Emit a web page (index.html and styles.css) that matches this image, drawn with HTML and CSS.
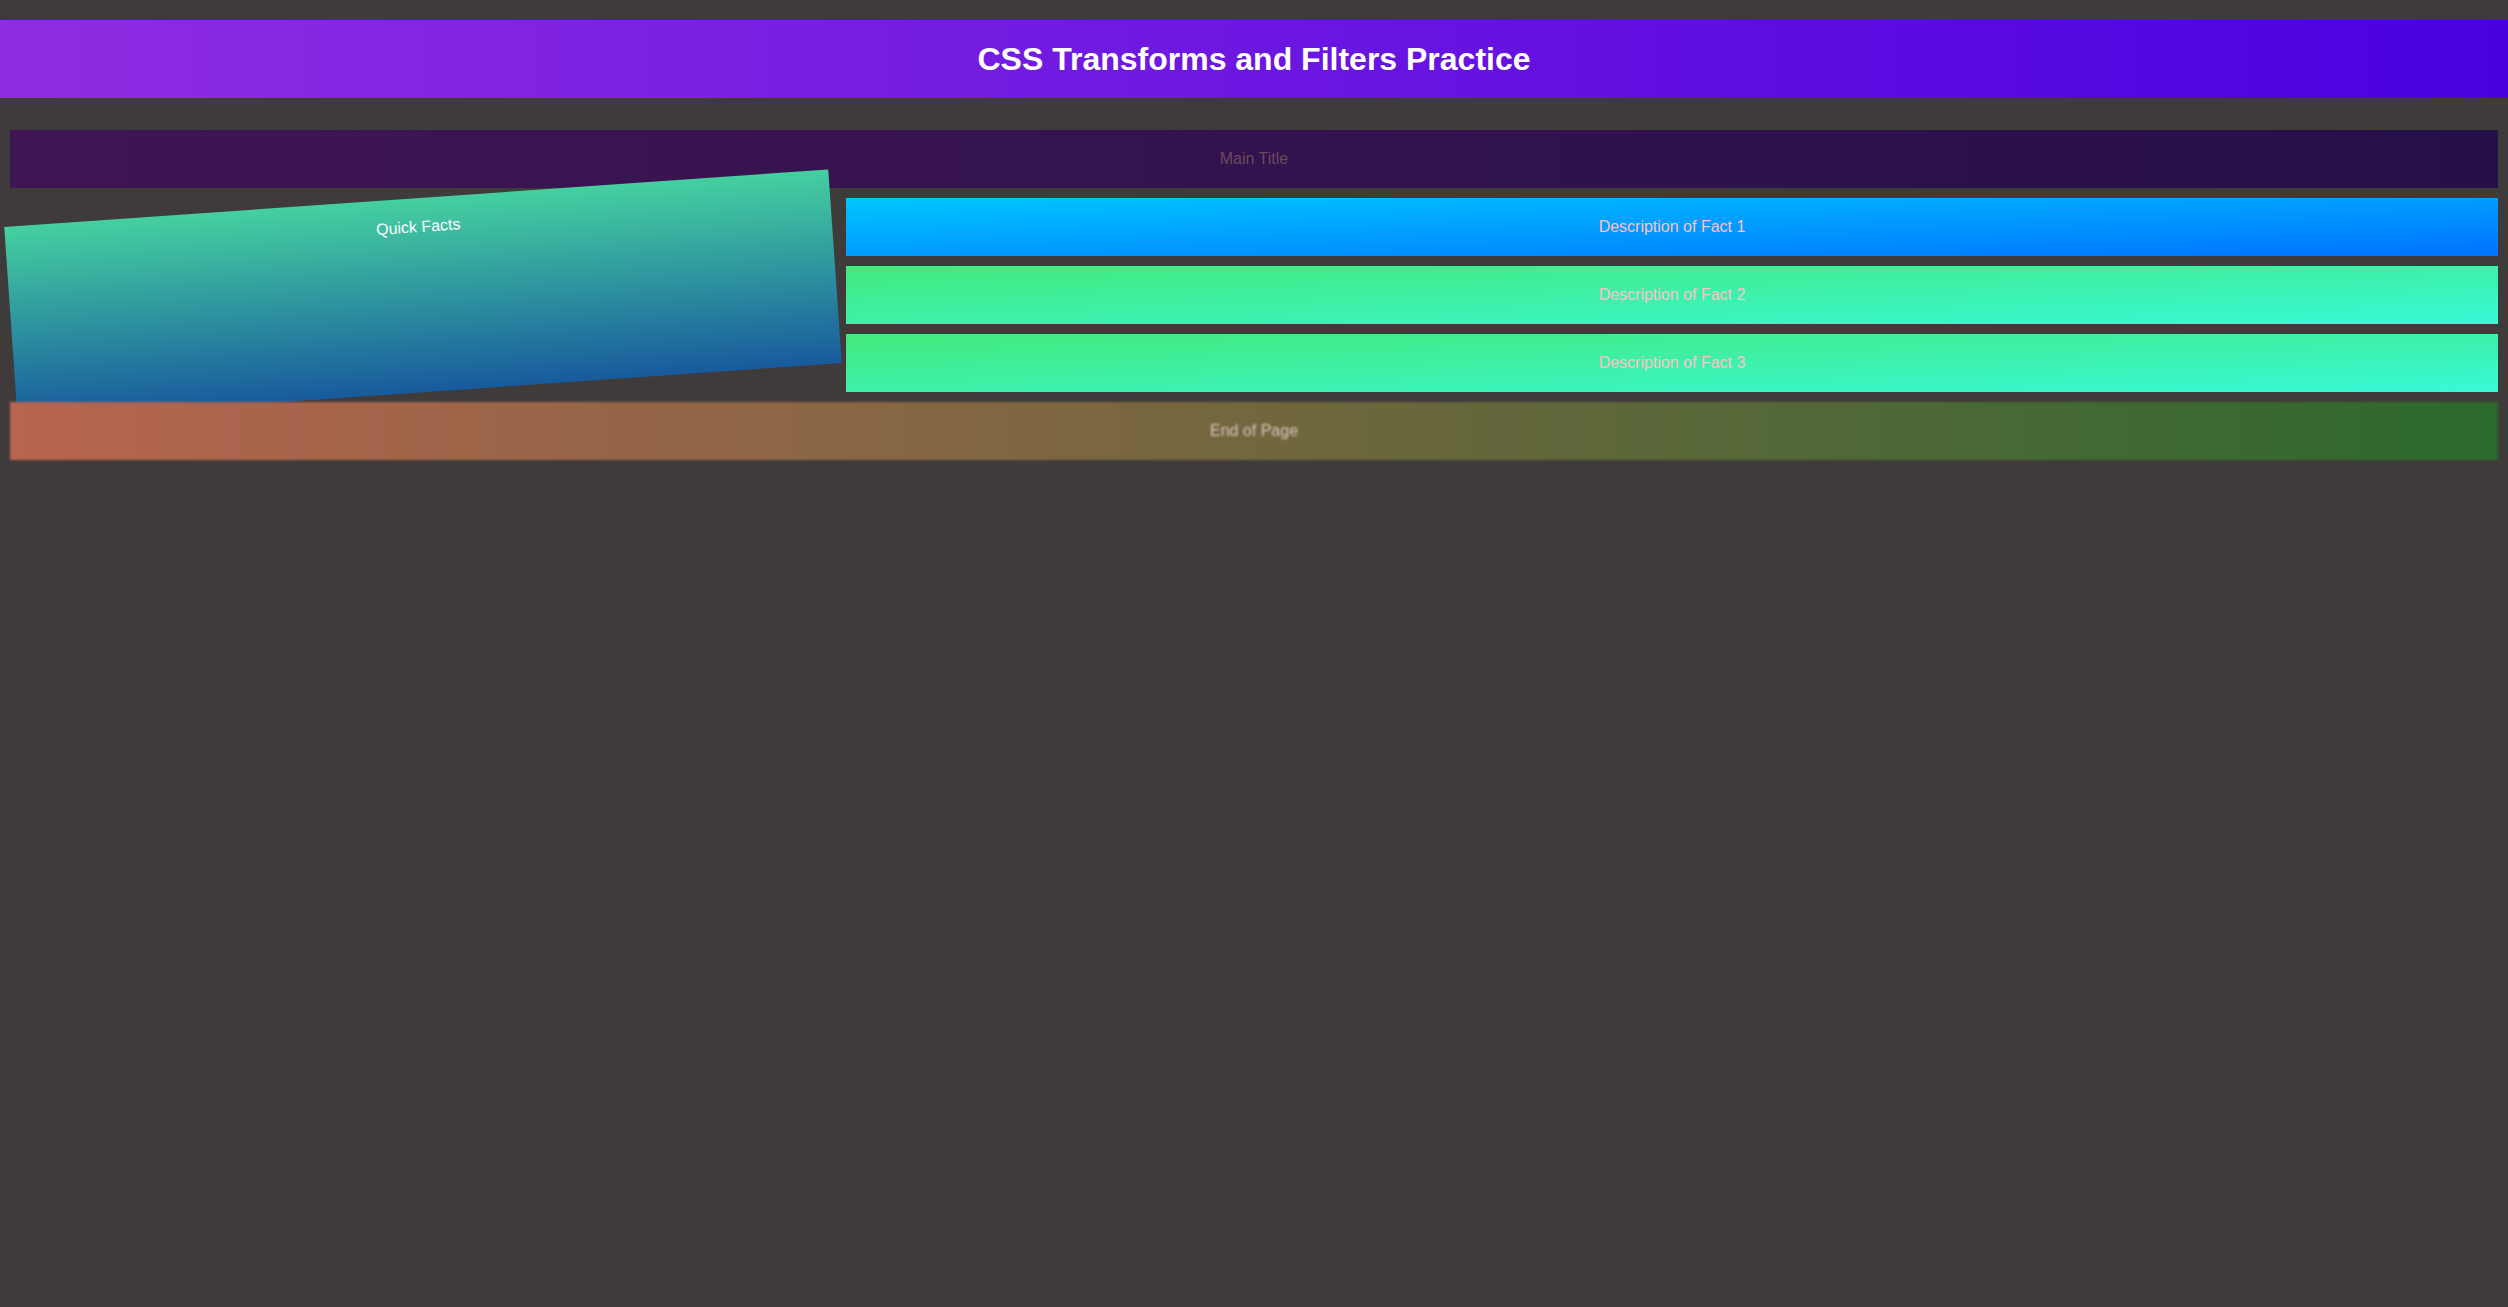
FILE: index.html
```html
<!DOCTYPE html>
<html lang="en">
<head>
<meta charset="utf-8">
<title>CSS Transforms and Filters Practice</title>
<link rel="stylesheet" href="styles.css">
</head>
<body>
<header class="site-header">
  <h1 class="site-title">CSS Transforms and Filters Practice</h1>
</header>
<main class="layout">
  <div class="box main-title">Main Title</div>
  <div class="box quick-facts">Quick Facts</div>
  <div class="box fact fact-1">Description of Fact 1</div>
  <div class="box fact fact-2">Description of Fact 2</div>
  <div class="box fact fact-3">Description of Fact 3</div>
  <div class="box end-page">End of Page</div>
</main>
</body>
</html>
```

FILE: styles.css
```css
html, body {
  margin: 0;
  padding: 0;
}

body {
  background: #3f3b3a;
  font-family: "Liberation Sans", Arial, sans-serif;
  font-size: 16px;
}

.site-header {
  margin-top: 20px;
  background: linear-gradient(to right, #8e2de2, #4a00e0);
  padding: 20px;
  text-align: center;
}

.site-title {
  margin: 0;
  font-size: 32px;
  line-height: 38px;
  font-weight: bold;
  color: #ffffff;
}

.layout {
  display: grid;
  grid-template-columns: 1fr 2fr;
  gap: 10px;
  padding: 32px 10px 10px;
}

.box {
  padding: 20px;
  text-align: center;
  line-height: 18px;
}

.main-title {
  grid-column: 1 / -1;
  background: linear-gradient(to right, #3f1553, #26104a);
  color: #6c4a5a;
}

.quick-facts {
  grid-column: 1;
  grid-row: 2 / 5;
  background: linear-gradient(to bottom, #45d0a0, #185a9d);
  color: #ffffff;
  transform: rotate(-4deg);
}

.fact {
  grid-column: 2;
  color: #ffc0cb;
}

.fact-1 {
  background: linear-gradient(to bottom right, #00c6ff, #0072ff);
}

.fact-2,
.fact-3 {
  background: linear-gradient(to bottom right, #43e97b, #38f9d7);
}

.end-page {
  grid-column: 1 / -1;
  background: linear-gradient(to right, #b86450, #2c6a2d);
  color: #dcc4c0;
  filter: blur(1px);
}
```
